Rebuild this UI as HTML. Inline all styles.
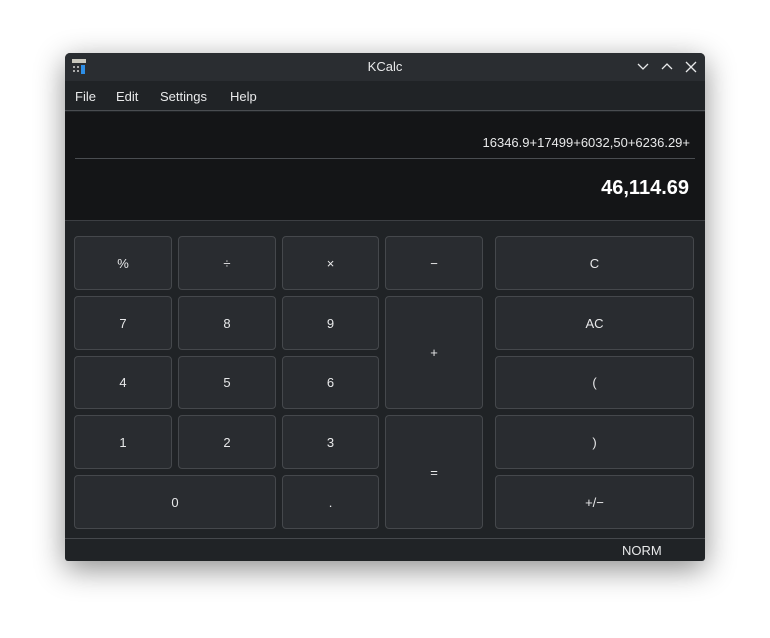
<!DOCTYPE html>
<html><head><style>
*{margin:0;padding:0;box-sizing:border-box}
body{width:770px;height:638px;background:#fff;position:relative;font-family:"Liberation Sans","DejaVu Sans",sans-serif;overflow:hidden}
.win{position:absolute;left:65px;top:53px;width:640px;height:508px;background:#202326;border-radius:5px 5px 3px 3px;overflow:hidden;box-shadow:0 8px 30px rgba(0,0,0,.45)}
.title{position:absolute;left:0;top:0;width:640px;height:28px;background:#2a2d31;color:#e8e9ea;font-size:13px;text-align:center;line-height:28px}
.menu{position:absolute;left:0;top:28px;width:640px;height:30px;background:#202326;border-bottom:1px solid #4a4d51;color:#e8e9ea;font-size:13px}
.menu span{position:absolute;top:8px}
.disp{position:absolute;left:0;top:59px;width:640px;height:109px;background:#141517;border-bottom:1px solid #3c3f43}
.b{position:absolute;background:#292c30;border:1px solid #45484c;border-radius:4px;color:#e8e9ea;font-size:13px;display:flex;align-items:center;justify-content:center}
.status{position:absolute;left:0;top:485px;width:640px;height:23px;border-top:1px solid #45484c;color:#e8e9ea;font-size:13px}
</style></head><body>
<div class="win">
 <div class="title">KCalc
  <svg style="position:absolute;left:6px;top:6px" width="16" height="16" viewBox="0 0 16 16">
   <rect x="1" y="0" width="14" height="4" fill="#c9c7bd"/>
   <rect x="2" y="7" width="2" height="2" fill="#aaa"/><rect x="6" y="7" width="2" height="2" fill="#aaa"/>
   <rect x="2" y="11" width="2" height="2" fill="#aaa"/><rect x="6" y="11" width="2" height="2" fill="#aaa"/>
   <rect x="10" y="6" width="4" height="9" fill="#2d8ee6"/>
  </svg>
  <svg style="position:absolute;left:570px;top:7px" width="68" height="14" viewBox="0 0 68 14" fill="none" stroke="#e8e9ea" stroke-width="1.3">
   <path d="M3 4l5 5 5-5"/><path d="M27 9l5-5 5 5"/><path d="M51 2l10 10M61 2l-10 10"/>
  </svg>
 </div>
 <div class="menu"><span style="left:10px">File</span><span style="left:51px">Edit</span><span style="left:95px">Settings</span><span style="left:165px">Help</span></div>
 <div class="disp">
  <div style="position:absolute;right:15px;top:23px;color:#e8e9ea;font-size:13px">16346.9+17499+6032,50+6236.29+</div>
  <div style="position:absolute;left:10px;top:46px;width:620px;height:1px;background:#4a4d51"></div>
  <div style="position:absolute;right:16px;top:65px;color:#fff;font-size:20px;font-weight:bold">46,114.69</div>
 </div>
 <div class="b" style="left:9px;top:183px;width:98px;height:54px">%</div>
 <div class="b" style="left:113px;top:183px;width:98px;height:54px">÷</div>
 <div class="b" style="left:217px;top:183px;width:97px;height:54px">×</div>
 <div class="b" style="left:320px;top:183px;width:98px;height:54px">−</div>
 <div class="b" style="left:430px;top:183px;width:199px;height:54px">C</div>
 <div class="b" style="left:9px;top:243px;width:98px;height:54px">7</div>
 <div class="b" style="left:113px;top:243px;width:98px;height:54px">8</div>
 <div class="b" style="left:217px;top:243px;width:97px;height:54px">9</div>
 <div class="b" style="left:320px;top:243px;width:98px;height:113px">+</div>
 <div class="b" style="left:430px;top:243px;width:199px;height:54px">AC</div>
 <div class="b" style="left:9px;top:303px;width:98px;height:53px">4</div>
 <div class="b" style="left:113px;top:303px;width:98px;height:53px">5</div>
 <div class="b" style="left:217px;top:303px;width:97px;height:53px">6</div>
 <div class="b" style="left:430px;top:303px;width:199px;height:53px">(</div>
 <div class="b" style="left:9px;top:362px;width:98px;height:54px">1</div>
 <div class="b" style="left:113px;top:362px;width:98px;height:54px">2</div>
 <div class="b" style="left:217px;top:362px;width:97px;height:54px">3</div>
 <div class="b" style="left:320px;top:362px;width:98px;height:114px">=</div>
 <div class="b" style="left:430px;top:362px;width:199px;height:54px">)</div>
 <div class="b" style="left:9px;top:422px;width:202px;height:54px">0</div>
 <div class="b" style="left:217px;top:422px;width:97px;height:54px">.</div>
 <div class="b" style="left:430px;top:422px;width:199px;height:54px">+/−</div>
 <div class="status"><span style="position:absolute;left:557px;top:4px">NORM</span></div>
</div>
</body></html>
